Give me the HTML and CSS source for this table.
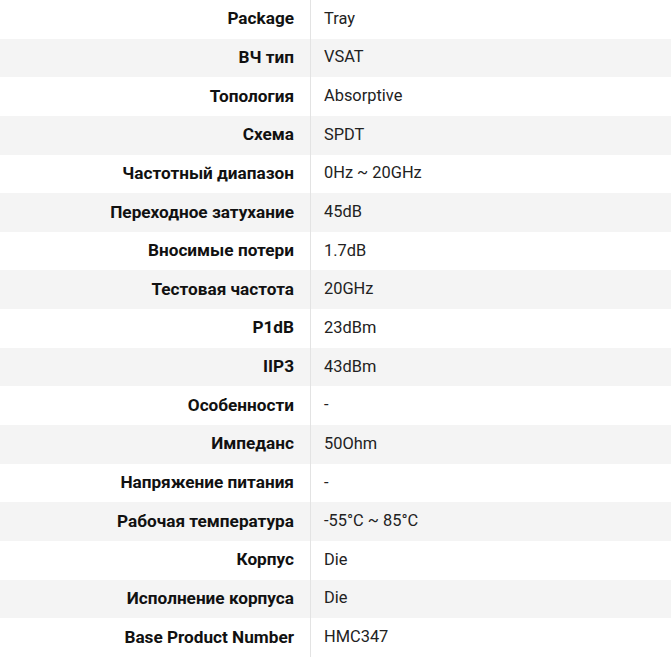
FILE: index.html
```html
<!DOCTYPE html>
<html lang="ru">
<head>
<meta charset="utf-8">
<link rel="stylesheet" href="styles.css">
</head>
<body>
<div class="specs">
  <div class="row"><div class="label">Package</div><div class="value">Tray</div></div>
  <div class="row"><div class="label">ВЧ тип</div><div class="value">VSAT</div></div>
  <div class="row"><div class="label">Топология</div><div class="value">Absorptive</div></div>
  <div class="row"><div class="label">Схема</div><div class="value">SPDT</div></div>
  <div class="row"><div class="label">Частотный диапазон</div><div class="value">0Hz ~ 20GHz</div></div>
  <div class="row"><div class="label">Переходное затухание</div><div class="value">45dB</div></div>
  <div class="row"><div class="label">Вносимые потери</div><div class="value">1.7dB</div></div>
  <div class="row"><div class="label">Тестовая частота</div><div class="value">20GHz</div></div>
  <div class="row"><div class="label">P1dB</div><div class="value">23dBm</div></div>
  <div class="row"><div class="label">IIP3</div><div class="value">43dBm</div></div>
  <div class="row"><div class="label">Особенности</div><div class="value">-</div></div>
  <div class="row"><div class="label">Импеданс</div><div class="value">50Ohm</div></div>
  <div class="row"><div class="label">Напряжение питания</div><div class="value">-</div></div>
  <div class="row"><div class="label">Рабочая температура</div><div class="value">-55°C ~ 85°C</div></div>
  <div class="row"><div class="label">Корпус</div><div class="value">Die</div></div>
  <div class="row"><div class="label">Исполнение корпуса</div><div class="value">Die</div></div>
  <div class="row"><div class="label">Base Product Number</div><div class="value">HMC347</div></div>
</div>
</body>
</html>
```
FILE: styles.css
```css
html, body {
  margin: 0;
  padding: 0;
  background: #ffffff;
}
body {
  font-family: Roboto, "Open Sans", sans-serif;
  font-size: 16px;
  color: #1f1f1f;
}
.specs {
  display: flex;
  flex-direction: column;
  width: 671px;
}
.row {
  display: grid;
  grid-template-columns: 310px 1px 1fr;
  height: 38.65px;
  align-items: center;
}
.row::before {
  content: "";
  grid-column: 2;
  grid-row: 1;
  align-self: stretch;
  background: #e3e3e3;
}
.row:nth-child(even) {
  background: #f4f4f4;
}
.label {
  grid-column: 1;
  grid-row: 1;
  text-align: right;
  padding-right: 16px;
  padding-bottom: 2px;
  font-size: 17.2px;
  font-weight: 700;
  color: #111;
}
.value {
  grid-column: 3;
  grid-row: 1;
  padding-left: 13px;
  padding-bottom: 2px;
  font-size: 16.4px;
  color: #222;
}
```
